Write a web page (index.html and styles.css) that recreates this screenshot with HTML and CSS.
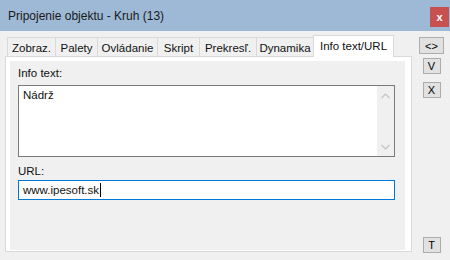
FILE: index.html
```html
<!DOCTYPE html>
<html lang="sk">
<head>
    <meta charset="UTF-8">
    <title>Pripojenie objektu - Kruh (13)</title>
    <link rel="stylesheet" href="styles.css">
</head>
<body>
    <div class="titlebar">
        <span class="title">Pripojenie objektu - Kruh (13)</span>
        <div class="close">x</div>
    </div>

    <div class="window">
        <div class="tabs-area">
            <div class="tabstrip">
                <div class="tab w48">Zobraz.</div>
                <div class="tab w42">Palety</div>
                <div class="tab w60">Ovládanie</div>
                <div class="tab w42">Skript</div>
                <div class="tab w57">Prekresľ.</div>
                <div class="tab w57">Dynamika</div>
                <div class="tab active">Info text/URL</div>
            </div>
            <div class="panel">
                <div class="page">
                    <div class="label">Info text:</div>
                    <div class="memo">
                        <div class="memo-text">Nádrž</div>
                        <div class="scrollbar">
                            <svg width="17" height="12" viewBox="0 0 17 12"><path d="M4.5 8 L8.5 4 L12.5 8" fill="none" stroke="#c2c2c2" stroke-width="1.2"/></svg>
                            <svg width="17" height="12" viewBox="0 0 17 12"><path d="M4.5 4 L8.5 8 L12.5 4" fill="none" stroke="#c2c2c2" stroke-width="1.2"/></svg>
                        </div>
                    </div>
                    <div class="label url-label">URL:</div>
                    <div class="edit"><span>www.ipesoft.sk</span><span class="caret"></span></div>
                </div>
            </div>
        </div>

        <div class="side">
            <div class="btn wide">&lt;&gt;</div>
            <div class="btn">V</div>
            <div class="btn gap">X</div>
            <div class="btn bottom">T</div>
        </div>
    </div>
</body>
</html>
```

FILE: styles.css
```css
body {
    margin: 0;
    width: 450px;
    height: 260px;
    overflow: hidden;
    background: #f0f0f0;
    font-family: "Liberation Sans", Arial, sans-serif;
    font-size: 11.5px;
    color: #111;
}
.titlebar {
    height: 31px;
    background: #9db9d6;
    display: flex;
    align-items: center;
    padding-left: 8px;
}
.title {
    font-size: 12px;
    color: #1a1a1a;
}
.close {
    margin-left: auto;
    margin-right: 1px;
    align-self: flex-start;
    margin-top: 7px;
    width: 19px;
    height: 20px;
    background: #c75050;
    color: #fff;
    font-weight: bold;
    font-size: 11px;
    display: flex;
    align-items: center;
    justify-content: center;
}
.window {
    display: flex;
    height: 229px;
    padding: 4px 0 0 5px;
    box-sizing: border-box;
}
.tabs-area {
    width: 407px;
}
.tabstrip {
    display: flex;
    align-items: flex-end;
    height: 21px;
    padding-left: 2px;
}
.tab {
    height: 19px;
    box-sizing: border-box;
    border: 1px solid #d9d9d9;
    border-bottom: none;
    border-right: none;
    display: flex;
    align-items: center;
    justify-content: center;
    padding-top: 1px;
}
.w48 { width: 48px; }
.w42 { width: 42px; }
.w60 { width: 60px; }
.w57 { width: 57px; }
.tab.active {
    width: 81px;
    height: 22px;
    margin-bottom: -1px;
    background: #fff;
    border-right: 1px solid #d9d9d9;
    position: relative;
    z-index: 1;
    padding-top: 0;
    padding-bottom: 2px;
}
.panel {
    height: 196px;
    box-sizing: border-box;
    border: 1px solid #d9d9d9;
    background: #fff;
    padding: 4px 6px 1px 4px;
}
.page {
    height: 100%;
    background: #f0f0f0;
    padding: 4px 8px 0 8px;
    box-sizing: border-box;
}
.label {
    line-height: 16px;
    margin-bottom: 4px;
}
.memo {
    width: 377px;
    height: 72px;
    box-sizing: border-box;
    border: 1px solid #7a7a7a;
    background: #fff;
    display: flex;
}
.memo-text {
    flex: 1;
    padding: 3px 4px;
}
.scrollbar {
    width: 17px;
    background: #f0f0f0;
    display: flex;
    flex-direction: column;
    justify-content: space-between;
    padding: 4px 0 3px;
}
.url-label {
    margin-top: 6px;
    margin-bottom: 1px;
}
.edit {
    width: 377px;
    height: 20px;
    box-sizing: border-box;
    border: 1px solid #0078d7;
    background: #fff;
    display: flex;
    align-items: center;
    padding-left: 4px;
}
.caret {
    width: 1px;
    height: 14px;
    background: #000;
    margin-left: 1px;
}
.side {
    flex: 1;
    display: flex;
    flex-direction: column;
    align-items: center;
    padding: 2px 0 7px 1px;
}
.btn {
    width: 18px;
    height: 16px;
    box-sizing: border-box;
    background: #e1e1e1;
    border: 1px solid #adadad;
    display: flex;
    align-items: center;
    justify-content: center;
    font-size: 11px;
    color: #000;
    margin-top: 4px;
}
.btn.wide {
    width: 25px;
    height: 17px;
    margin-top: 0;
}
.btn.gap {
    margin-top: 8px;
}
.btn.bottom {
    margin-top: auto;
}
```
